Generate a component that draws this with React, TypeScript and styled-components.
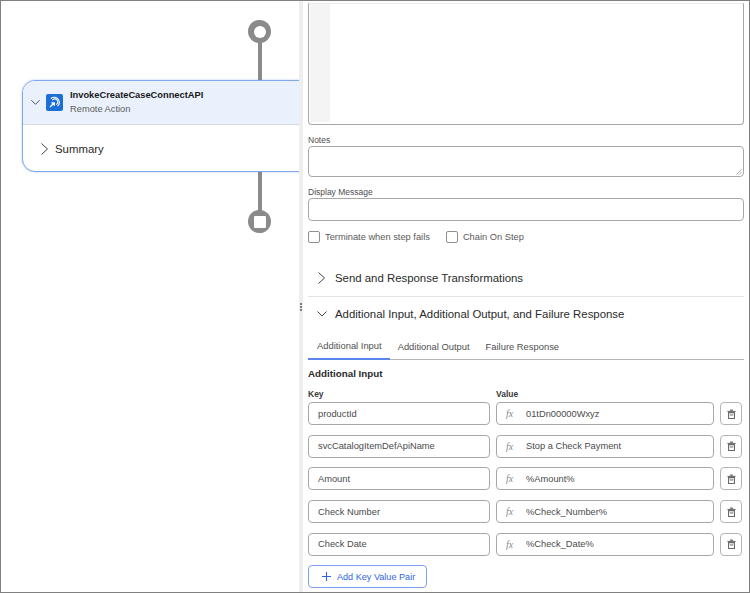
import React from "react";
import styled, { createGlobalStyle } from "styled-components";

const Global = createGlobalStyle`
  html, body { margin: 0; padding: 0; background: #fff; }
  body { font-family: "Liberation Sans", Arial, sans-serif; color: #2e2e2e; }
  * { box-sizing: border-box; }
`;

const Frame = styled.div`
  width: 750px;
  height: 593px;
  display: flex;
  overflow: hidden;
  border: 1px solid #808080;
  background: #fff;
`;

const Canvas = styled.div`
  position: relative;
  flex: 0 0 298px;
  overflow: hidden;
  background: #fff;
`;

const Connector = styled.div<{ $top: number; $h: number }>`
  position: absolute;
  left: 256.5px;
  top: ${(p) => p.$top}px;
  width: 4px;
  height: ${(p) => p.$h}px;
  background: #8a8a8a;
`;

const Node = styled.div<{ $top: number; $square?: boolean }>`
  position: absolute;
  left: 247px;
  top: ${(p) => p.$top}px;
  width: 23px;
  height: 23px;
  border-radius: 50%;
  background: #8a8a8a;
  display: flex;
  align-items: center;
  justify-content: center;
  &::after {
    content: "";
    width: 12px;
    height: 12px;
    border-radius: ${(p) => (p.$square ? "1px" : "50%")};
    background: #fff;
  }
`;

const Card = styled.div`
  position: absolute;
  left: 21px;
  top: 79px;
  width: 300px;
  height: 92px;
  border: 1px solid #7fa9ea;
  border-radius: 13px;
  background: #fff;
  box-shadow: 0 0 2px rgba(90, 140, 230, 0.5);
  overflow: hidden;
`;

const CardHead = styled.div`
  height: 44px;
  background: #eaf1fd;
  border-bottom: 1px solid #d4d8de;
  display: flex;
  align-items: center;
  padding-left: 7px;
`;

const ActionIcon = styled.div`
  width: 17px;
  height: 17px;
  margin-left: 5px;
  margin-right: 7px;
  border-radius: 2px;
  background: #1b6fd6;
  display: flex;
  align-items: center;
  justify-content: center;
`;

const CardTitles = styled.div`
  display: flex;
  flex-direction: column;
  gap: 1.5px;
  margin-top: -1px;
`;

const CardTitle = styled.div`
  font-size: 9.3px;
  line-height: 12px;
  font-weight: 700;
  color: #181818;
`;

const CardSub = styled.div`
  font-size: 9.3px;
  line-height: 12px;
  color: #5c5c5c;
`;

const SummaryRow = styled.div`
  height: 47px;
  display: flex;
  align-items: center;
  padding-left: 15.5px;
  gap: 4.5px;
  font-size: 11.4px;
  color: #2a2a2a;
`;

const Panel = styled.div`
  flex: 1;
  position: relative;
  border-left: 4px solid #eeeeee;
  padding: 2px 5px 0 5px;
  display: flex;
  flex-direction: column;
  background: #fff;
`;

const Grip = styled.div`
  position: absolute;
  left: -4px;
  top: 302px;
  width: 4px;
  display: flex;
  flex-direction: column;
  align-items: center;
  gap: 1px;
  & > i {
    width: 2px;
    height: 2px;
    border-radius: 50%;
    background: #555;
  }
`;

const Editor = styled.div`
  height: 122px;
  border: 1px solid #a8a8a8;
  border-top: 1px solid #ececec;
  border-radius: 0 0 4px 4px;
  background: #fff;
  display: flex;
  padding: 0 0 2px 1px;
`;

const Gutter = styled.div`
  width: 20px;
  background: #f4f4f4;
`;

const FieldLabel = styled.label<{ $mt: number }>`
  display: block;
  margin-top: ${(p) => p.$mt}px;
  font-size: 8.5px;
  line-height: 10px;
  color: #4e4e4e;
`;

const Notes = styled.div`
  position: relative;
  margin-top: 1px;
  height: 31px;
  border: 1px solid #a8a8a8;
  border-radius: 4px;
  background: #fff;
`;

const Resize = styled.svg`
  position: absolute;
  right: 1px;
  bottom: 1px;
`;

const TextBox = styled.div`
  margin-top: 1px;
  height: 23px;
  border: 1px solid #a8a8a8;
  border-radius: 4px;
  background: #fff;
`;

const CheckRow = styled.div`
  display: flex;
  align-items: center;
  margin-top: 9px;
  height: 13px;
`;

const CheckItem = styled.div`
  display: flex;
  align-items: center;
  gap: 5px;
  margin-right: 16px;
  font-size: 9.3px;
  color: #5a5a5a;
`;

const Box = styled.span`
  width: 12px;
  height: 12px;
  border: 1px solid #8f8f8f;
  border-radius: 2px;
  background: #fff;
`;

const SectionHead = styled.div<{ $mt: number; $h: number; $rule?: boolean }>`
  margin-top: ${(p) => p.$mt}px;
  height: ${(p) => p.$h}px;
  display: flex;
  align-items: center;
  gap: 7.5px;
  padding-left: 7.5px;
  font-size: 11.4px;
  color: #2a2a2a;
  border-bottom: ${(p) => (p.$rule ? "1px solid #e4e4e4" : "none")};
`;

const Tabs = styled.div`
  margin-top: 1px;
  height: 28px;
  display: flex;
  border-bottom: 1px solid #b4b4b4;
`;

const Tab = styled.div<{ $active?: boolean }>`
  padding: 0 8px 0 ${(p) => (p.$active ? 9 : 8)}px;
  margin-bottom: -1px;
  display: flex;
  align-items: center;
  font-size: 9.4px;
  color: #505050;
  border-bottom: ${(p) => (p.$active ? "2px solid #5a84ee" : "none")};
`;

const SectionTitle = styled.div`
  margin-top: 8px;
  font-size: 9.8px;
  line-height: 12px;
  font-weight: 700;
  color: #2a2a2a;
`;

const Columns = `
  display: grid;
  grid-template-columns: 182px 218px 22px;
  column-gap: 6px;
`;

const Grid = styled.div`
  ${Columns}
  margin-top: 9px;
`;

const ColHead = styled.div`
  font-size: 8.5px;
  line-height: 10px;
  font-weight: 700;
  color: #3c3c3c;
  height: 13px;
`;

const Rows = styled.div`
  grid-column: 1 / -1;
  display: flex;
  flex-direction: column;
  gap: 9.7px;
`;

const Row = styled.div`
  ${Columns}
  height: 23px;
`;

const Input = styled.div`
  border: 1px solid #a8a8a8;
  border-radius: 4px;
  background: #fff;
  display: flex;
  align-items: center;
  padding-left: 9px;
  font-size: 9.3px;
  color: #4a4a4a;
`;

const Fx = styled.span`
  font-family: "Liberation Serif", serif;
  font-style: italic;
  font-size: 10px;
  color: #8a8a8a;
  width: 20px;
  flex: none;
`;

const IconButton = styled.div`
  border: 1px solid #b4b4b4;
  border-radius: 4px;
  background: #fff;
  display: flex;
  align-items: center;
  justify-content: center;
`;

const AddButton = styled.div`
  margin-top: 9.7px;
  width: 119px;
  height: 23px;
  border: 1px solid #7fa0ee;
  border-radius: 4px;
  background: #fff;
  display: flex;
  align-items: center;
  gap: 5px;
  padding-left: 12px;
  font-size: 9.1px;
  color: #2f66e0;
`;

const Chevron = ({ dir, size = 12, color = "#444" }: { dir: "right" | "down"; size?: number; color?: string }) => (
  <svg width={size} height={size} viewBox="0 0 12 12" fill="none" style={{ flex: "none" }}>
    <path
      d={dir === "right" ? "M2.5 0.5 8.5 6 2.5 11.5" : "M1.5 3.5 6 8 10.5 3.5"}
      stroke={color}
      strokeWidth="1"
    />
  </svg>
);

const Trash = () => (
  <svg width="9" height="10" viewBox="0 0 10 11" fill="none">
    <rect x="3.5" y="0.5" width="3" height="1.5" fill="#6a6a6a" />
    <rect x="0.5" y="2" width="9" height="1.2" fill="#6a6a6a" />
    <path d="M1.7 4h6.6v6.5H1.7z" stroke="#6a6a6a" strokeWidth="1.2" />
    <rect x="3" y="6" width="4" height="1.1" fill="#6a6a6a" />
  </svg>
);

const rows: [string, string][] = [
  ["productId", "01tDn00000Wxyz"],
  ["svcCatalogItemDefApiName", "Stop a Check Payment"],
  ["Amount", "%Amount%"],
  ["Check Number", "%Check_Number%"],
  ["Check Date", "%Check_Date%"],
];

export default function App() {
  return (
    <>
      <Global />
      <Frame>
        <Canvas>
          <Connector $top={35} $h={50} />
          <Connector $top={165} $h={50} />
          <Node $top={19} />
          <Node $top={209} $square />
          <Card>
            <CardHead>
              <Chevron dir="down" size={11} />
              <ActionIcon>
                <svg width="13" height="13" viewBox="0 0 13 13" fill="none">
                  <path d="M3 2.5a5 5 0 1 1 6.6 7.6" stroke="#fff" strokeWidth="1.1" />
                  <path d="M4.4 4.2a3 3 0 1 1 3.8 4.4" stroke="#fff" strokeWidth="1.1" />
                  <path d="M2 11l4-4M3.4 6.8H6.3v2.9" stroke="#fff" strokeWidth="1.2" />
                </svg>
              </ActionIcon>
              <CardTitles>
                <CardTitle>InvokeCreateCaseConnectAPI</CardTitle>
                <CardSub>Remote Action</CardSub>
              </CardTitles>
            </CardHead>
            <SummaryRow>
              <Chevron dir="right" />
              Summary
            </SummaryRow>
          </Card>
        </Canvas>
        <Panel>
          <Grip>
            <i />
            <i />
            <i />
          </Grip>
          <Editor>
            <Gutter />
          </Editor>
          <FieldLabel $mt={10}>Notes</FieldLabel>
          <Notes>
            <Resize width="6" height="6" viewBox="0 0 6 6" fill="none">
              <path d="M0.5 5.5 5.5 0.5M3 5.5 5.5 3" stroke="#888" strokeWidth="0.7" />
            </Resize>
          </Notes>
          <FieldLabel $mt={10}>Display Message</FieldLabel>
          <TextBox />
          <CheckRow>
            <CheckItem>
              <Box />
              Terminate when step fails
            </CheckItem>
            <CheckItem>
              <Box />
              Chain On Step
            </CheckItem>
          </CheckRow>
          <SectionHead $mt={17} $h={37} $rule>
            <Chevron dir="right" />
            Send and Response Transformations
          </SectionHead>
          <SectionHead $mt={0} $h={34}>
            <Chevron dir="down" />
            Additional Input, Additional Output, and Failure Response
          </SectionHead>
          <Tabs>
            <Tab $active>Additional Input</Tab>
            <Tab>Additional Output</Tab>
            <Tab>Failure Response</Tab>
          </Tabs>
          <SectionTitle>Additional Input</SectionTitle>
          <Grid>
            <ColHead>Key</ColHead>
            <ColHead>Value</ColHead>
            <span />
            <Rows>
              {rows.map(([k, v]) => (
                <Row key={k}>
                  <Input>{k}</Input>
                  <Input>
                    <Fx>fx</Fx>
                    {v}
                  </Input>
                  <IconButton>
                    <Trash />
                  </IconButton>
                </Row>
              ))}
            </Rows>
          </Grid>
          <AddButton>
            <svg width="11" height="11" viewBox="0 0 11 11" fill="none">
              <path d="M5.5 1v9M1 5.5h9" stroke="#2f66e0" strokeWidth="1.1" />
            </svg>
            Add Key Value Pair
          </AddButton>
        </Panel>
      </Frame>
    </>
  );
}
